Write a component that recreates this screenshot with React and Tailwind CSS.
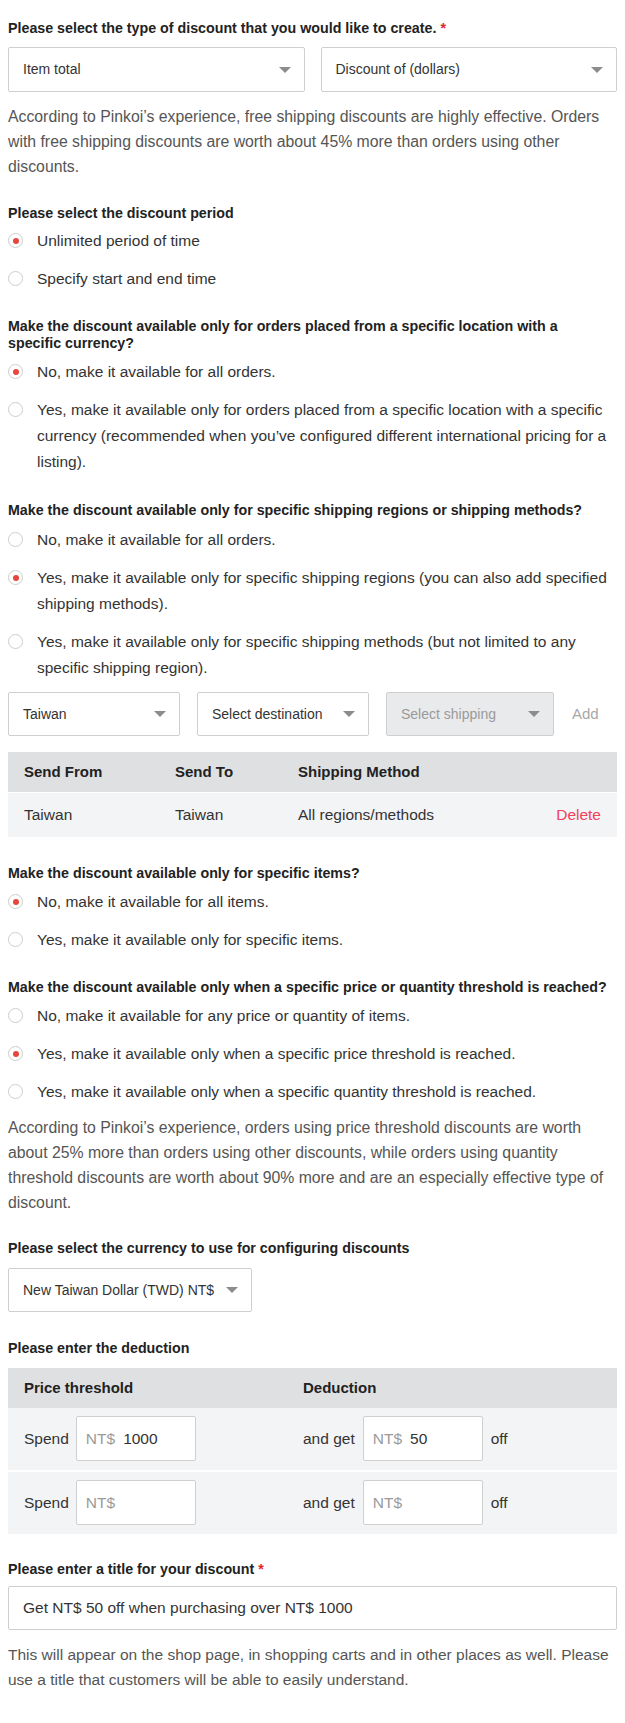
import { useState } from "react";

const FONT = { fontFamily: '"Liberation Sans", Arial, sans-serif' };

function Heading({ children, required, className = "" }) {
    return (
        <h3 className={`text-[14.25px] font-bold leading-[17px] text-[#222] ${className}`}>
            {children}
            {required && <span className="ml-1 text-[#e3242b]">*</span>}
        </h3>
    );
}

function Caret() {
    return (
        <svg width="12" height="6" viewBox="0 0 12 6" className="shrink-0">
            <path d="M0 0 H12 L6 6 Z" fill="#8c8c8c" />
        </svg>
    );
}

function Select({ value, className = "", disabled = false }) {
    return (
        <div
            className={`flex items-center justify-between gap-2 rounded-[2px] border border-[#cfcfcf] pl-[14px] pr-[13px] text-[14px] ${
                disabled ? "bg-[#e9eaec] text-[#9a9a9a]" : "bg-white text-[#333]"
            } ${className}`}
        >
            <span className="whitespace-nowrap">{value}</span>
            <Caret />
        </div>
    );
}

function RadioGroup({ options, selected, onChange, className = "" }) {
    return (
        <div className={`flex flex-col gap-[12px] ${className}`}>
            {options.map((opt, i) => (
                <label key={i} className="flex cursor-pointer items-start gap-[14px]" onClick={() => onChange(i)}>
                    <span className="mt-[5px] flex h-[15px] w-[15px] shrink-0 items-center justify-center rounded-full border border-[#cdcdcd] bg-white">
                        {selected === i && <span className="h-[6px] w-[6px] rounded-full bg-[#e8453e]" />}
                    </span>
                    <span className="text-[15.5px] leading-[26px] text-[#333]">{opt}</span>
                </label>
            ))}
        </div>
    );
}

function Note({ children, className = "" }) {
    return <p className={`leading-[25px] text-[#555] ${className}`}>{children}</p>;
}

function MoneyInput({ value }) {
    return (
        <div className="flex h-[45px] w-[120px] items-center gap-[8px] rounded-[2px] border border-[#cfcfcf] bg-white px-[9px] text-[15.5px]">
            <span className="text-[#9a9a9a]">NT$</span>
            {value && <span className="text-[#333]">{value}</span>}
        </div>
    );
}

export default function App() {
    const [period, setPeriod] = useState(0);
    const [location, setLocation] = useState(0);
    const [shipping, setShipping] = useState(1);
    const [items, setItems] = useState(0);
    const [threshold, setThreshold] = useState(1);

    return (
        <div className="bg-white px-2 pt-[20px] pb-[31px]" style={FONT}>
            <Heading required>Please select the type of discount that you would like to create.</Heading>
            <div className="mt-[10px] grid grid-cols-2 gap-4">
                <Select value="Item total" className="h-[45px]" />
                <Select value="Discount of (dollars)" className="h-[45px]" />
            </div>
            <Note className="mt-[12px] text-[15.8px]">
                According to Pinkoi’s experience, free shipping discounts are highly effective. Orders with free shipping
                discounts are worth about 45% more than orders using other discounts.
            </Note>

            <Heading className="mt-[26px]">Please select the discount period</Heading>
            <RadioGroup
                className="mt-[6px]"
                selected={period}
                onChange={setPeriod}
                options={["Unlimited period of time", "Specify start and end time"]}
            />

            <Heading className="mt-[26px] max-w-[580px]">
                Make the discount available only for orders placed from a specific location with a specific currency?
            </Heading>
            <RadioGroup
                className="mt-[7px]"
                selected={location}
                onChange={setLocation}
                options={[
                    "No, make it available for all orders.",
                    "Yes, make it available only for orders placed from a specific location with a specific currency (recommended when you’ve configured different international pricing for a listing).",
                ]}
            />

            <Heading className="mt-[27px]">
                Make the discount available only for specific shipping regions or shipping methods?
            </Heading>
            <RadioGroup
                className="mt-[8px]"
                selected={shipping}
                onChange={setShipping}
                options={[
                    "No, make it available for all orders.",
                    "Yes, make it available only for specific shipping regions (you can also add specified shipping methods).",
                    "Yes, make it available only for specific shipping methods (but not limited to any specific shipping region).",
                ]}
            />
            <div className="mt-[11px] flex items-center">
                <Select value="Taiwan" className="h-[44px] w-[172px]" />
                <Select value="Select destination" className="ml-[17px] h-[44px] w-[172px]" />
                <Select value="Select shipping" disabled className="ml-[17px] h-[44px] w-[168px]" />
                <span className="ml-[18px] text-[15px] text-[#a8a8a8]">Add</span>
            </div>
            <div className="mt-[16px]">
                <div className="grid h-[40px] grid-cols-[151px_123px_1fr] items-center bg-[#dfe0e2] px-[16px] text-[15px] font-bold text-[#222]">
                    <span>Send From</span>
                    <span>Send To</span>
                    <span>Shipping Method</span>
                </div>
                <div className="grid h-[45px] grid-cols-[151px_123px_1fr_auto] items-center border-t border-white bg-[#f3f4f6] px-[16px] text-[15.5px] text-[#333]">
                    <span>Taiwan</span>
                    <span>Taiwan</span>
                    <span>All regions/methods</span>
                    <span className="text-[#f0425a]">Delete</span>
                </div>
            </div>

            <Heading className="mt-[28px]">Make the discount available only for specific items?</Heading>
            <RadioGroup
                className="mt-[7px]"
                selected={items}
                onChange={setItems}
                options={["No, make it available for all items.", "Yes, make it available only for specific items."]}
            />

            <Heading className="mt-[26px]">
                Make the discount available only when a specific price or quantity threshold is reached?
            </Heading>
            <RadioGroup
                className="mt-[7px]"
                selected={threshold}
                onChange={setThreshold}
                options={[
                    "No, make it available for any price or quantity of items.",
                    "Yes, make it available only when a specific price threshold is reached.",
                    "Yes, make it available only when a specific quantity threshold is reached.",
                ]}
            />
            <Note className="mt-[10px] text-[15.8px]">
                According to Pinkoi’s experience, orders using price threshold discounts are worth about 25% more than
                orders using other discounts, while orders using quantity threshold discounts are worth about 90% more and
                are an especially effective type of discount.
            </Note>

            <Heading className="mt-[25px]">Please select the currency to use for configuring discounts</Heading>
            <Select value="New Taiwan Dollar (TWD) NT$" className="mt-[11px] h-[44px] w-[244px]" />

            <Heading className="mt-[28px]">Please enter the deduction</Heading>
            <div className="mt-[11px]">
                <div className="grid h-[40px] grid-cols-[279px_1fr] items-center bg-[#dfe0e2] px-[16px] text-[15px] font-bold text-[#222]">
                    <span>Price threshold</span>
                    <span>Deduction</span>
                </div>
                {["1000", ""].map((v, i) => (
                    <div
                        key={i}
                        className={`grid grid-cols-[279px_1fr] bg-[#f3f4f6] px-[16px] pt-[8px] pb-[9px] text-[15.5px] text-[#333] ${
                            i > 0 ? "border-t-2 border-white" : ""
                        }`}
                    >
                        <div className="flex items-center gap-[7px]">
                            <span>Spend</span>
                            <MoneyInput value={v} />
                        </div>
                        <div className="flex items-center gap-[8px]">
                            <span>and get</span>
                            <MoneyInput value={i === 0 ? "50" : ""} />
                            <span>off</span>
                        </div>
                    </div>
                ))}
            </div>

            <Heading required className="mt-[27px]">Please enter a title for your discount</Heading>
            <div className="mt-[8px] flex h-[44px] items-center rounded-[2px] border border-[#cfcfcf] px-[14px] text-[15.5px] text-[#333]">
                Get NT$ 50 off when purchasing over NT$ 1000
            </div>
            <Note className="mt-[12px] text-[15.5px]">
                This will appear on the shop page, in shopping carts and in other places as well. Please use a title that
                customers will be able to easily understand.
            </Note>
        </div>
    );
}
